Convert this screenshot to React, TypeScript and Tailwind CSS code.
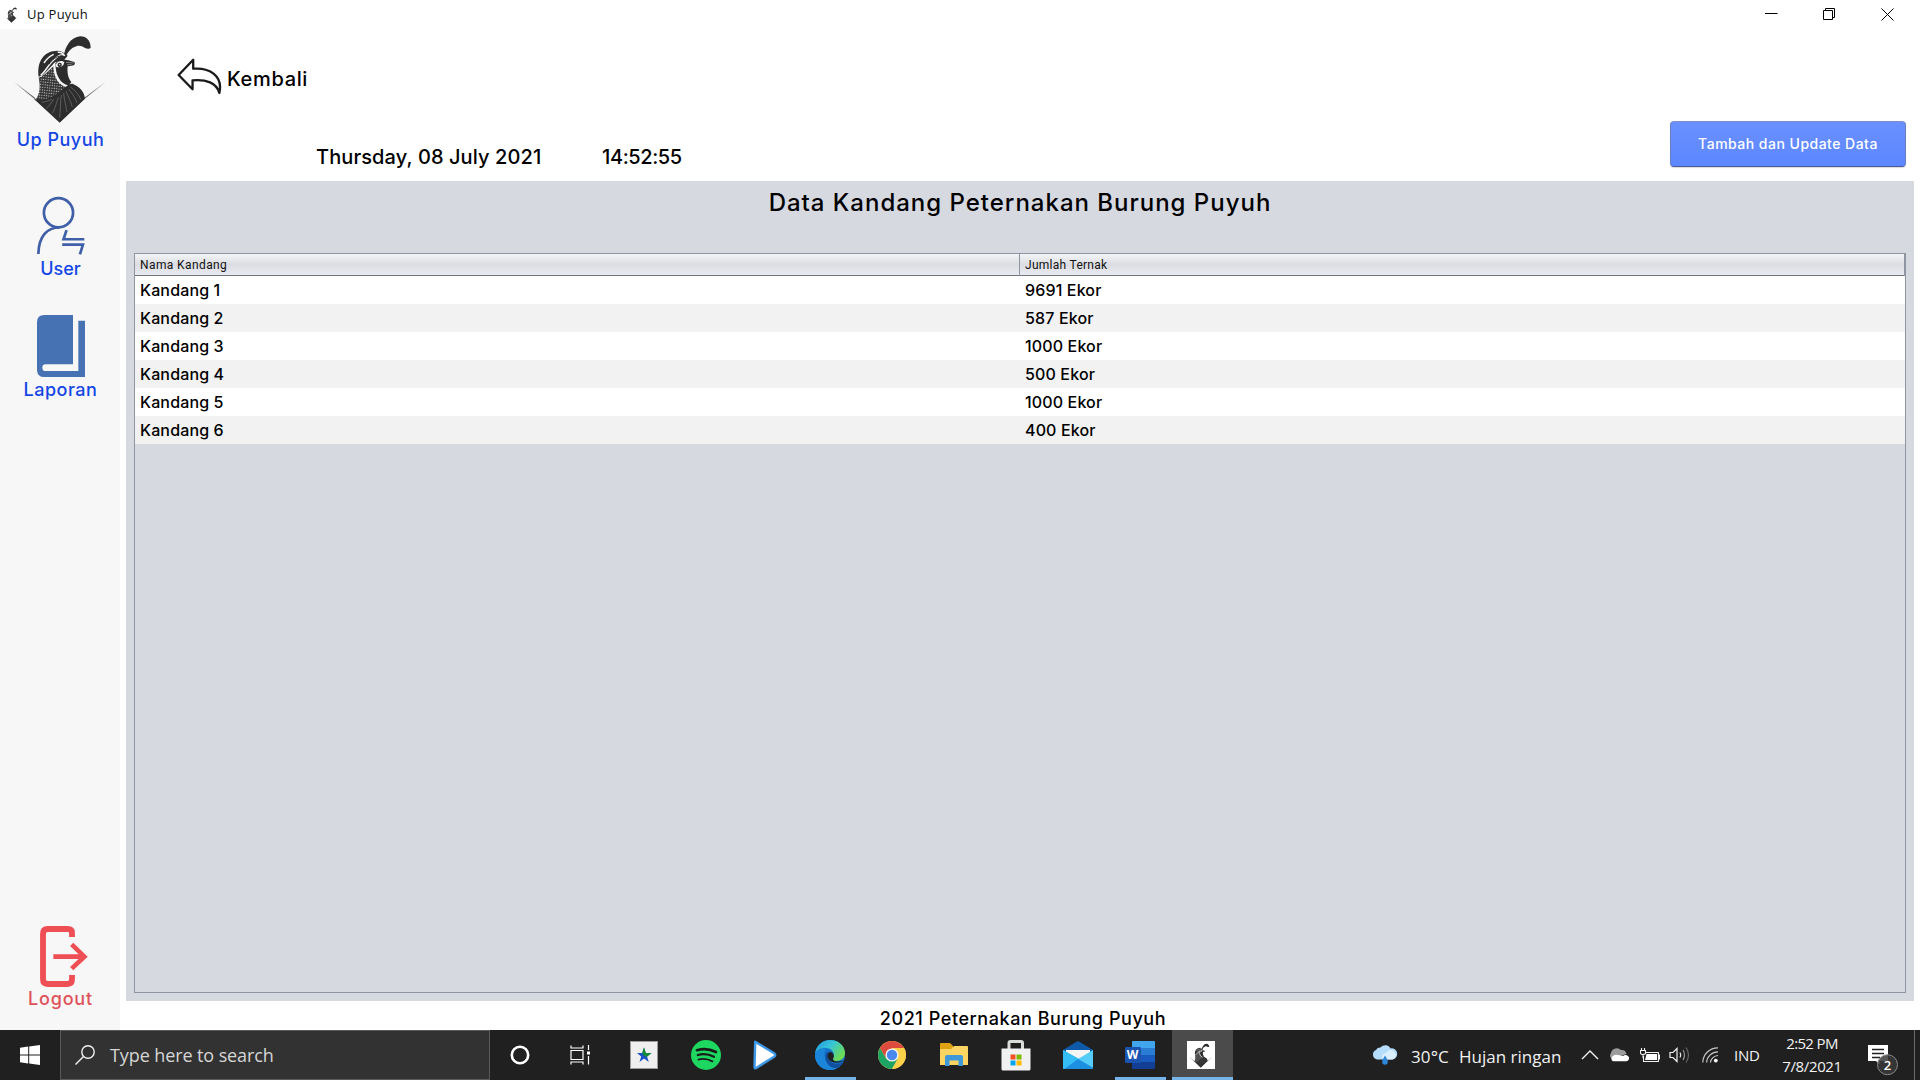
import React from "react";

const rows = [
  ["Kandang 1", "9691 Ekor"],
  ["Kandang 2", "587 Ekor"],
  ["Kandang 3", "1000 Ekor"],
  ["Kandang 4", "500 Ekor"],
  ["Kandang 5", "1000 Ekor"],
  ["Kandang 6", "400 Ekor"],
];

function Quail({ className, viewBox = "42 99 285 270" }: { className: string; viewBox?: string }) {
  return (
    <svg viewBox={viewBox} className={className} fill="none" preserveAspectRatio="none">
      <defs>
        <pattern id="scales" width="7" height="8" patternUnits="userSpaceOnUse" patternTransform="rotate(6)">
          <rect width="7" height="8" fill="#333" />
          <rect x="1.6" y="2" width="3.6" height="3.2" rx="1" fill="#d4d4d4" />
        </pattern>
      </defs>
      <path d="M45 243L108 290L111 298zM320 243L256 290L252 298z" fill="#666" />
      <path d="M195 164C197 140 214 108 244 106C263 106 275 120 275 140C272 144 264 144 258 141C248 135 241 133 232 136C216 141 207 152 200 168z" fill="#2d2d2d" />
      <path d="M119 227C113 182 134 149 176 149C188 150 198 156 206 164L195 178L168 184L132 222z" fill="#2d2d2d" />
      <path d="M119 230C140 222 156 200 172 188L176 232L200 254L214 262L180 300L108 298C124 280 124 254 119 230z" fill="url(#scales)" />
      <path d="M125 223C142 210 150 184 176 167C184 161 192 160 198 164M164 160C150 166 142 175 135 186M176 154C184 153 190 156 194 160" stroke="#f4f4f4" strokeWidth="4.5" />
      <path d="M150 190C158 176 172 166 190 164" stroke="#2d2d2d" strokeWidth="3" />
      <path d="M166 192C174 176 196 174 208 178L226 183C230 188 226 194 218 194L206 196C204 214 207 232 217 243L208 256C188 258 172 226 166 192z" fill="#2d2d2d" />
      <path d="M166 188C166 220 176 248 208 257" stroke="#f4f4f4" strokeWidth="7" />
      <path d="M170 191C177 178 190 178 196 184C194 196 184 201 172 198z" fill="#f4f4f4" />
      <circle cx="182" cy="192" r="6.5" fill="#2d2d2d" />
      <circle cx="182" cy="191" r="2" fill="#eee" />
      <path d="M201 184L224 186M204 191L218 191" stroke="#ddd" strokeWidth="1.5" />
      <path d="M105 294C130 302 164 290 188 268C202 256 212 246 222 249C242 258 256 272 258 293L182 365z" fill="#2d2d2d" />
      <path d="M128 304C140 302 150 299 158 295M142 322C150 316 156 306 164 294M160 337C168 324 172 306 178 289M182 350C184 330 184 305 187 282M204 333C200 310 195 292 194 276M220 318C213 295 204 280 201 270M234 306C228 287 215 272 208 264M246 296C239 280 226 266 214 258" stroke="#808080" strokeWidth="1.8" />
    </svg>
  );
}

function NavLabel({ children, className }: { children: React.ReactNode; className: string }) {
  return <div className={`h-6 text-[18px] leading-6 font-medium whitespace-nowrap ${className}`}>{children}</div>;
}

function Sidebar() {
  return (
    <nav className="flex w-[120px] shrink-0 flex-col items-center bg-[#f7f7f7] pt-[5px] pb-[19px] pl-px">
      <Quail className="h-[90px] w-[95px]" />
      <NavLabel className="mt-1 tracking-[0.5px] text-[#1446e6]">Up Puyuh</NavLabel>
      <svg viewBox="108 47 146 176" className="mt-11 h-[59px] w-[49px]" fill="none" stroke="#3f5fa8" strokeWidth="8">
        <circle cx="175" cy="97" r="43.5" />
        <path d="M115 220C116 166 142 141 178 141M199 149L190 176H252M186 192H248L239 221" />
      </svg>
      <NavLabel className="mt-0.5 text-[#1446e6]">User</NavLabel>
      <svg viewBox="108 405 144 186" className="mt-[34px] h-[62px] w-12" fill="#4671b3">
        <path d="M130 405H216V553H134a10 10 0 0 0 0 20H232V422H252V591H130q-22 0-22-22V427q0-22 22-22z" />
      </svg>
      <NavLabel className="mt-px tracking-[0.5px] text-[#1446e6]">Laporan</NavLabel>
      <svg viewBox="120 78 144 183" className="mt-auto ml-[6px] h-[61px] w-12" fill="none" stroke="#ee4f54">
        <path d="M216 111V98q0-11-13-11H143q-14 0-14 14V238q0 14 14 14H203q13 0 13-14V225" strokeWidth="17.5" />
        <path d="M160 170H252M215 133L253 170L215 206" strokeWidth="14" />
      </svg>
      <NavLabel className="tracking-[0.8px] text-[#e0525a]">Logout</NavLabel>
    </nav>
  );
}

function TitleBar() {
  return (
    <header className="flex h-[29px] shrink-0 items-center bg-white pl-[7px] font-['Open_Sans']">
      <Quail viewBox="104 99 174 270" className="h-4 w-[10px]" />
      <span className="ml-[10px] pb-px text-[13px] leading-[18px] tracking-[0.25px] text-[#111]">Up Puyuh</span>
      <div className="mr-[26px] ml-auto flex items-center gap-[45px] text-black">
        <svg viewBox="0 0 13 13" className="h-[13px] w-[13px]" fill="none" stroke="currentColor">
          <path d="M0 5.5H12.5" />
        </svg>
        <svg viewBox="0 0 13 13" className="h-[13px] w-[13px]" fill="none" stroke="currentColor">
          <path d="M.5 2.5H9.5V11.5H.5zM2.5 2.5V.5H11.5V9.5H9.5" />
        </svg>
        <svg viewBox="0 0 13 13" className="h-[13px] w-[13px]" fill="none" stroke="currentColor">
          <path d="M.5 .5L12.5 12.5M12.5 .5L.5 12.5" />
        </svg>
      </div>
    </header>
  );
}

function Toolbar() {
  return (
    <div className="flex h-[152px] shrink-0 justify-between pr-[14px] pl-[51px]">
      <div className="flex flex-col">
        <div className="flex pt-[28px]">
          <svg viewBox="530 172 136 114" className="h-[38px] w-[45px]" fill="none" stroke="#1b1b1b" strokeWidth="7" strokeLinejoin="round">
            <path d="M535 226L579 180V207C628 203 670 228 658 280C650 250 618 238 577 242V269z" />
          </svg>
          <div className="ml-[5px] pt-[8px] text-[20px] leading-7 font-medium tracking-[0.65px]">Kembali</div>
        </div>
        <div className="mt-12 flex pl-[139px] text-[20px] leading-7 font-medium whitespace-nowrap">
          <span className="w-[286px] tracking-[0.1px]">Thursday, 08 July 2021</span>
          <span className="tracking-[-0.4px]">14:52:55</span>
        </div>
      </div>
      <button className="mt-[92px] h-[46px] w-[236px] rounded-[4px] border border-t-[#7f8fc4] border-r-[#6a7ec0] border-b-[#4a5c96] border-l-[#6a7ec0] bg-linear-to-b from-[#6a90ff] to-[#5c87ff] pb-px text-[14px] font-medium tracking-[0.48px] text-white shadow-[0_1px_1px_rgba(0,0,0,0.15)]">
        Tambah dan Update Data
      </button>
    </div>
  );
}

function DataPanel() {
  return (
    <section className="mr-1.5 flex h-[820px] flex-col bg-[#d6d9e0] px-2 pb-2">
      <h1 className="h-[72px] pt-[6px] text-center text-[24px] leading-8 font-medium tracking-[0.99px]">
        Data Kandang Peternakan Burung Puyuh
      </h1>
      <div className="flex-1 border border-[#8f95a3]">
        <div className="grid h-[22px] grid-cols-2 border-b border-[#6f7580] bg-linear-to-b from-[#f4f5f7] via-[#dcdde2] via-50% to-[#e9ebf1] font-['Roboto'] text-[12px] leading-[22px] text-[#111]">
          <div className="border-r border-[#8f95a3] pl-[5px] tracking-[0.4px]">Nama Kandang</div>
          <div className="border-r border-[#8f95a3] pl-[5px] tracking-[0.28px]">Jumlah Ternak</div>
        </div>
        {rows.map(([name, count]) => (
          <div key={name} className="grid h-7 grid-cols-2 text-[16px] leading-[29px] font-medium even:bg-white odd:bg-[#f2f2f2]">
            <div className="pl-[5px] tracking-[0.14px]">{name}</div>
            <div className="pl-[5px] tracking-[0.14px]">{count}</div>
          </div>
        ))}
      </div>
    </section>
  );
}

function Slot({ children, running }: { children: React.ReactNode; running?: boolean }) {
  return (
    <div className="relative flex h-full w-[62px] items-center justify-center">
      {children}
      {running && <div className="absolute bottom-0 left-[6px] h-[3px] w-[51px] bg-[#76b3e8]" />}
    </div>
  );
}

function PinnedApps() {
  return (
    <div className="flex h-full items-center">
      <div className="flex w-[60px] justify-center">
        <svg viewBox="0 0 20 20" className="h-5 w-5" fill="none" stroke="#fff" strokeWidth="2.6">
          <circle cx="10" cy="10" r="8.2" />
        </svg>
      </div>
      <div className="flex w-[63px] justify-center pr-[2px]">
        <svg viewBox="0 0 21 20" className="h-5 w-[21px]" fill="none" stroke="#fff" strokeWidth="1.2">
          <path d="M1 5.5H13V14.5H1zM1 .5V3H13V.5M1 19.5V17H13V19.5M18.5 0V5M18.5 11V19.5" />
          <path d="M17 6.5h3v3h-3z" fill="#fff" stroke="none" />
        </svg>
      </div>
      <Slot>
        <svg viewBox="0 0 28 28" className="h-7 w-7">
          <path d="M0 0H28V28H0z" fill="#9b9b9b" />
          <path d="M1 1H27V27H1z" fill="#efefef" />
          <path d="M14 6.5L15.8 12H21.5L17 15.5L18.8 21L14 17.6L9.5 21L11.2 15.5L7 12H12.4z" fill="#1d54c4" />
          <path d="M12.4 11L14 6.5L15.8 12H21.5L17 15.8L14.5 15C13 14 12.4 12.5 12.4 11z" fill="#168a35" />
        </svg>
      </Slot>
      <Slot>
        <svg viewBox="0 0 30 30" className="h-[30px] w-[30px]" fill="none" stroke="#191b1a" strokeLinecap="round">
          <circle cx="15" cy="15" r="15" fill="#1ed760" stroke="none" />
          <path d="M6 10.2C12 8.4 19 9 25 12" strokeWidth="2.7" />
          <path d="M6.8 15C12 13.4 18 14.2 23 16.7" strokeWidth="2.3" />
          <path d="M7.4 19.6C12 18.3 17 19 21.4 21.3" strokeWidth="1.9" />
        </svg>
      </Slot>
      <Slot>
        <svg viewBox="0 0 24 30" className="mr-[6px] h-[30px] w-6">
          <path d="M2.2 1.8L21.5 13.6Q23 15 21.5 16.4L2.8 28.2Q1.5 28.5 1.5 27z" fill="#fff" stroke="#3e98e8" strokeWidth="2.4" strokeLinejoin="round" />
        </svg>
      </Slot>
      <Slot running>
        <svg viewBox="0 0 30 30" className="h-[30px] w-[30px]">
          <defs>
            <linearGradient id="edgeTop" x1="0" y1="0" x2="1" y2=".6">
              <stop offset="0" stopColor="#2494dc" />
              <stop offset=".5" stopColor="#36c5d8" />
              <stop offset="1" stopColor="#6fdc50" />
            </linearGradient>
          </defs>
          <circle cx="15" cy="15" r="15" fill="#1473c9" />
          <path d="M0 14C1 5 8 0 15 0C24 0 30 6 30 13C30 18 26 21 21 21C18 21 17 19.5 18.5 17.5C20 14 18 8 10 8C5 8 1 11 0 14z" fill="url(#edgeTop)" />
          <path d="M0 15C1 11 6 8 11 8.5C8 12 9 20 15 24C18 26 23 25 27.5 23C24 29 18 30.5 13 30C5 29 0 22 0 15z" fill="#1b86d9" />
          <path d="M11 13C8 20 14 29 22 28C25 27 27 25 28 22.5C20 26 14 22 13 17C12.8 15 13.5 13.5 14.5 12.5C13 12 11.5 12 11 13z" fill="#124f9c" />
          <path d="M14.5 12.2C12 14 12 18 15 20.5C19 23.5 25 23.5 29 20.5C25 22 19 22 18 19.5C17.8 18.5 19 17.5 18.8 15.5C18.4 13 16 11.5 14.5 12.2z" fill="#202020" />
        </svg>
      </Slot>
      <Slot>
        <svg viewBox="0 0 28 28" className="h-7 w-7">
          <circle cx="14" cy="14" r="14" fill="#fc5" />
          <path d="M1.9 7A14 14 0 0 1 26.1 7H14L8 17.5z" fill="#dc4b3e" />
          <path d="M1.9 7A14 14 0 0 0 14 28L20 17.5H8z" fill="#1da362" />
          <path d="M26.1 7A14 14 0 0 1 14 28L20 17.5L14 7z" fill="#fdd04a" />
          <circle cx="14" cy="14" r="6.6" fill="#f3f3f3" />
          <circle cx="14" cy="14" r="5.2" fill="#4a87ee" />
        </svg>
      </Slot>
      <Slot>
        <svg viewBox="0 0 28 26" className="h-[26px] w-7">
          <path d="M0 2Q0 1 1 1H10L13 4V8H0z" fill="#e0a210" />
          <path d="M0 7H11L14 4H27Q28 4 28 5V23H0z" fill="#fcd462" />
          <path d="M5 24V15Q5 13 7 13H21Q23 13 23 15V24H18.5V18.5H9.5V24z" fill="#3f99d8" />
        </svg>
      </Slot>
      <Slot>
        <svg viewBox="0 0 30 31" className="mr-px h-[31px] w-[30px]">
          <path d="M8 9V3Q8 1.5 9.5 1.5H20Q21.5 1.5 21.5 3V9" fill="none" stroke="#d8ddda" strokeWidth="3" />
          <path d="M.5 8.5H29.5V29Q29.5 30.5 28 30.5H2Q.5 30.5 .5 29z" fill="#f1f1f1" />
          <path d="M9.5 14.5h5v5h-5z" fill="#f25022" />
          <path d="M15.5 14.5h5v5h-5z" fill="#7fba00" />
          <path d="M9.5 20.5h5v5h-5z" fill="#00a4ef" />
          <path d="M15.5 20.5h5v5h-5z" fill="#ffb900" />
        </svg>
      </Slot>
      <Slot>
        <svg viewBox="0 0 30 28" className="h-7 w-[30px]">
          <path d="M0 9L14 .4Q15 0 16 .4L30 9V14H0z" fill="#0f5aa8" />
          <path d="M3 9H27V18H3z" fill="#f5f5f5" />
          <path d="M0 9L18 19L30 27Q30 28 29 28H1Q0 28 0 27z" fill="#2fb4f0" />
          <path d="M30 9L15 18L30 27z" fill="#55cdf8" />
          <path d="M15 18L1 28H29L30 27z" fill="#1d8fe0" />
          <path d="M0 9L15 18L1 28Q0 28 0 27z" fill="#35bdf5" />
        </svg>
      </Slot>
      <Slot running>
        <div className="relative mr-px flex h-7 w-[30px] items-center">
          <svg viewBox="0 0 30 28" className="h-7 w-[30px]">
            <path d="M7 1Q7 0 8 0H29Q30 0 30 1V7H7z" fill="#41a5ee" />
            <path d="M7 7H30V14H7z" fill="#2b7cd3" />
            <path d="M7 14H30V21H7z" fill="#185abd" />
            <path d="M7 21H30V27Q30 28 29 28H8Q7 28 7 27z" fill="#123f93" />
            <rect y="6" width="16" height="16" rx="1.2" fill="#1b54b0" />
          </svg>
          <span className="absolute top-[6px] left-0 w-4 text-center font-['Open_Sans'] text-[12px] leading-4 font-bold text-white">W</span>
        </div>
      </Slot>
      <div className="ml-px flex h-full w-[61px] flex-col items-center border-b-[3px] border-[#76b3e8] bg-[#4b4b4b] pt-[11px] pr-[3px]">
        <div className="flex h-7 w-7 items-center justify-center bg-white">
          <Quail className="h-[25px] w-[26px]" />
        </div>
      </div>
    </div>
  );
}

function Tray() {
  return (
    <div className="ml-auto flex h-full items-center whitespace-nowrap text-[#f2f2f2]">
      <svg viewBox="0 0 26 20" className="h-5 w-[26px]">
        <path d="M5 14.5A5 5 0 0 1 4 5A4.2 4.2 0 0 1 8.5 2.5A6 6 0 0 1 18.6 3.4A5.6 5.6 0 0 1 20.5 14.5z" fill="#b5dcfa" />
        <path d="M10 12A4 4 0 0 1 14 8A5 5 0 0 1 22 6.5A4.5 4.5 0 0 1 20.5 14.5H11z" fill="#dceffd" />
        <path d="M13 10.5Q16 15 15.8 17A2.8 2.8 0 0 1 10.2 17Q10.2 15 13 10.5z" fill="#2e86d8" />
      </svg>
      <span className="ml-[13px] w-[48px] pt-[3px] text-[17px] leading-6 tracking-[0.1px]">30°C</span>
      <span className="w-[122px] pt-[3px] text-[17px] leading-6">Hujan ringan</span>
      <svg viewBox="0 0 18 10" className="h-[10px] w-[18px]" fill="none" stroke="currentColor" strokeWidth="1.4">
        <path d="M1 9L9 1L17 9" />
      </svg>
      <svg viewBox="0 0 20 14" className="ml-[10px] h-[14px] w-5">
        <path d="M3 11A4 4 0 0 1 2 5A6 6 0 0 1 12 2A5 5 0 0 1 17.5 6z" fill="#9c9c9c" />
        <path d="M4 13.3A3 3 0 0 1 4 8A5 5 0 0 1 9 7L14 8A4 4 0 0 1 19 8A3 3 0 0 1 17 13.3z" fill="#fff" />
      </svg>
      <svg viewBox="0 0 20 15" className="ml-[11px] h-[15px] w-5" fill="none" stroke="currentColor" strokeWidth="1.1">
        <path d="M5.5 4.5H18.4V13.5H3.5V8M18.4 7H19.5V11H18.4M1.5 0V2M4.5 0V2M.5 2.5H5.5V5Q5.5 6.5 3 6.5Q.5 6.5 .5 5zM3 6.5V10" />
        <path d="M6.5 6H17V12H5z" fill="#fff" stroke="none" />
      </svg>
      <svg viewBox="0 0 21 18" className="ml-[9px] h-[18px] w-[21px]" fill="none" stroke="currentColor" strokeWidth="1.2">
        <path d="M1 6.5H4L8 2.5V15.5L4 11.5H1z" />
        <path d="M11 6.5Q12.5 9 11 11.5" />
        <path d="M14 4Q17 9 14 14" stroke="#999" />
        <path d="M17 1.5Q22 9 17 16.5" stroke="#666" />
      </svg>
      <svg viewBox="0 0 17 16" className="ml-[12px] h-4 w-[17px]" fill="none" stroke="currentColor" strokeWidth="1.2">
        <path d="M.8 15.5A15 15 0 0 1 16 .8M4.6 15.5A11.5 11.5 0 0 1 16 4.8M8.4 15.5A8 8 0 0 1 16 8.5" stroke="#c8c8c8" />
        <circle cx="13.8" cy="13.6" r="1.9" fill="#fff" stroke="none" />
      </svg>
      <span className="ml-[15px] w-12 text-[15px] leading-5 tracking-[-0.3px]">IND</span>
      <div className="w-[60px] text-center text-[15px] leading-[23px]">
        <div className="tracking-[-0.65px]">2:52 PM</div>
        <div className="tracking-[-0.35px]">7/8/2021</div>
      </div>
      <div className="relative mt-[10px] ml-[26px] h-[31px] w-[31px]">
        <svg viewBox="0 0 31 31" className="h-[31px] w-[31px]">
          <path d="M0 0H20V16H11.5V19.5L8 16H0z" fill="#fff" />
          <path d="M4 4.5H16M4 8.5H16M4 12.5H12" stroke="#202020" strokeWidth="1.3" />
          <circle cx="19.5" cy="19.7" r="10" fill="#3a3a3a" fillOpacity=".85" stroke="#8a8a8a" />
        </svg>
        <span className="absolute top-[11px] left-[9px] w-[21px] text-center text-[13px] leading-[18px] font-semibold text-white">2</span>
      </div>
      <div className="ml-[15px] h-full w-[6px] border-l border-[#6a6a6a]" />
    </div>
  );
}

function Taskbar() {
  return (
    <footer className="flex h-[50px] shrink-0 items-center bg-[#202020] font-['Open_Sans']">
      <div className="flex w-[60px] justify-center">
        <svg viewBox="0 0 20 20" className="h-5 w-5" fill="#fff">
          <path d="M0 2.8L8.2 1.6V9.5H0zM9.2 1.5L20 0V9.5H9.2zM0 10.4H8.2V18.4L0 17.2zM9.2 10.4H20V20L9.2 18.5z" />
        </svg>
      </div>
      <div className="flex h-full w-[430px] items-center border border-[#5a5a5a] bg-[#323232] pl-[14px]">
        <svg viewBox="0 0 20 20" className="h-5 w-5" fill="none" stroke="#f0f0f0" strokeWidth="1.4">
          <circle cx="13" cy="7" r="6.2" />
          <path d="M8.5 11.5L.5 19.5" />
        </svg>
        <span className="ml-[15px] text-[18px] leading-6 tracking-[-0.1px] text-[#d6d6d6]">Type here to search</span>
      </div>
      <PinnedApps />
      <Tray />
    </footer>
  );
}

export default function App() {
  return (
    <div className="flex h-[1080px] w-[1920px] flex-col overflow-hidden bg-white font-['Inter',sans-serif] text-black">
      <TitleBar />
      <div className="flex min-h-0 flex-1">
        <Sidebar />
        <main className="flex flex-1 flex-col pl-[6px]">
          <Toolbar />
          <DataPanel />
          <div className="h-[29px] pt-[6px] text-center text-[18px] leading-6 font-medium tracking-[0.57px]">
            2021 Peternakan Burung Puyuh
          </div>
        </main>
      </div>
      <Taskbar />
    </div>
  );
}
